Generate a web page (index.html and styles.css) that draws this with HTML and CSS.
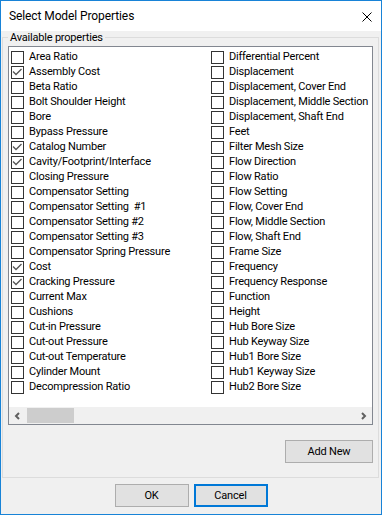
FILE: index.html
```html
<!DOCTYPE html>
<html lang="en">

<head>
    <meta charset="UTF-8">
    <title>Select Model Properties</title>
    <link rel="stylesheet" href="styles.css">
</head>

<body>
    <div class="window">
        <div class="titlebar">
            <span class="title">Select Model Properties</span>
            <svg class="close" width="10" height="10" viewBox="0 0 10 10">
                <path d="M0.5 0.5 L9.5 9.5 M9.5 0.5 L0.5 9.5" stroke="#000" stroke-width="1" fill="none" />
            </svg>
        </div>

        <fieldset class="group">
            <legend>Available properties</legend>
            <div class="listbox">
                <div class="items">
                    <!-- column 1 -->
                    <label class="item"><span class="box"></span>Area Ratio</label>
                    <label class="item"><span class="box checked"><svg viewBox="0 0 11 11"><polyline points="1,4.5 4,7.5 9.5,2" /></svg></span>Assembly Cost</label>
                    <label class="item"><span class="box"></span>Beta Ratio</label>
                    <label class="item"><span class="box"></span>Bolt Shoulder Height</label>
                    <label class="item"><span class="box"></span>Bore</label>
                    <label class="item"><span class="box"></span>Bypass Pressure</label>
                    <label class="item"><span class="box checked"><svg viewBox="0 0 11 11"><polyline points="1,4.5 4,7.5 9.5,2" /></svg></span>Catalog Number</label>
                    <label class="item"><span class="box checked"><svg viewBox="0 0 11 11"><polyline points="1,4.5 4,7.5 9.5,2" /></svg></span>Cavity/Footprint/Interface</label>
                    <label class="item"><span class="box"></span>Closing Pressure</label>
                    <label class="item"><span class="box"></span>Compensator Setting</label>
                    <label class="item"><span class="box"></span>Compensator Setting &nbsp;#1</label>
                    <label class="item"><span class="box"></span>Compensator Setting #2</label>
                    <label class="item"><span class="box"></span>Compensator Setting #3</label>
                    <label class="item"><span class="box"></span>Compensator Spring Pressure</label>
                    <label class="item"><span class="box checked"><svg viewBox="0 0 11 11"><polyline points="1,4.5 4,7.5 9.5,2" /></svg></span>Cost</label>
                    <label class="item"><span class="box checked"><svg viewBox="0 0 11 11"><polyline points="1,4.5 4,7.5 9.5,2" /></svg></span>Cracking Pressure</label>
                    <label class="item"><span class="box"></span>Current Max</label>
                    <label class="item"><span class="box"></span>Cushions</label>
                    <label class="item"><span class="box"></span>Cut-in Pressure</label>
                    <label class="item"><span class="box"></span>Cut-out Pressure</label>
                    <label class="item"><span class="box"></span>Cut-out Temperature</label>
                    <label class="item"><span class="box"></span>Cylinder Mount</label>
                    <label class="item"><span class="box"></span>Decompression Ratio</label>
                    <!-- column 2 -->
                    <label class="item"><span class="box"></span>Differential Percent</label>
                    <label class="item"><span class="box"></span>Displacement</label>
                    <label class="item"><span class="box"></span>Displacement, Cover End</label>
                    <label class="item"><span class="box"></span>Displacement, Middle Section</label>
                    <label class="item"><span class="box"></span>Displacement, Shaft End</label>
                    <label class="item"><span class="box"></span>Feet</label>
                    <label class="item"><span class="box"></span>Filter Mesh Size</label>
                    <label class="item"><span class="box"></span>Flow Direction</label>
                    <label class="item"><span class="box"></span>Flow Ratio</label>
                    <label class="item"><span class="box"></span>Flow Setting</label>
                    <label class="item"><span class="box"></span>Flow, Cover End</label>
                    <label class="item"><span class="box"></span>Flow, Middle Section</label>
                    <label class="item"><span class="box"></span>Flow, Shaft End</label>
                    <label class="item"><span class="box"></span>Frame Size</label>
                    <label class="item"><span class="box"></span>Frequency</label>
                    <label class="item"><span class="box"></span>Frequency Response</label>
                    <label class="item"><span class="box"></span>Function</label>
                    <label class="item"><span class="box"></span>Height</label>
                    <label class="item"><span class="box"></span>Hub Bore Size</label>
                    <label class="item"><span class="box"></span>Hub Keyway Size</label>
                    <label class="item"><span class="box"></span>Hub1 Bore Size</label>
                    <label class="item"><span class="box"></span>Hub1 Keyway Size</label>
                    <label class="item"><span class="box"></span>Hub2 Bore Size</label>
                </div>
                <div class="hscroll">
                    <span class="arrow">
                        <svg width="7" height="8" viewBox="0 0 7 8"><polyline points="5,1 2,4 5,7" /></svg>
                    </span>
                    <span class="thumb"></span>
                    <span class="track"></span>
                    <span class="arrow">
                        <svg width="7" height="8" viewBox="0 0 7 8"><polyline points="2,1 5,4 2,7" /></svg>
                    </span>
                </div>
            </div>
            <div class="actions">
                <button class="btn btn-add" type="button">Add New</button>
            </div>
        </fieldset>

        <div class="footer">
            <button class="btn btn-dlg" type="button">OK</button>
            <button class="btn btn-dlg btn-default" type="button">Cancel</button>
        </div>
    </div>
</body>

</html>
```

FILE: styles.css
```css
* {
    margin: 0;
    padding: 0;
    box-sizing: border-box;
}

body {
    font-family: Roboto, "Liberation Sans", sans-serif;
    font-size: 11px;
    letter-spacing: -0.2px;
    color: #000;
}

.window {
    width: 382px;
    height: 515px;
    border: 1px solid #1883d7;
    background: #f0f0f0;
    display: flex;
    flex-direction: column;
}

.titlebar {
    height: 30px;
    flex: none;
    background: #fff;
    display: flex;
    align-items: center;
    justify-content: space-between;
    padding: 0 9px 0 8px;
    font-size: 12px;
    letter-spacing: -0.1px;
}

.close {
    display: block;
    margin-top: 2px;
}

/* group box */
.group {
    min-width: 0;
    margin: 0 2px 0 1px;
    border: 1px solid #dcdcdc;
    padding: 0 5px 14px 5px;
}

.group legend {
    padding: 0 2px;
    line-height: 13px;
}

.listbox {
    margin-top: 2px;
    height: 379px;
    border: 1px solid #828790;
    background: #fff;
    display: flex;
    flex-direction: column;
}

.items {
    flex: 1;
    overflow: hidden;
    padding: 2px 0 0 2px;
    display: grid;
    grid-auto-flow: column;
    grid-template-rows: repeat(23, 15px);
    grid-auto-columns: 200px;
}

.item {
    display: flex;
    align-items: center;
    gap: 5px;
    white-space: nowrap;
}

.box {
    flex: none;
    align-self: flex-end;
    width: 13px;
    height: 13px;
    border: 1px solid #333;
    background: #fff;
}

.box svg {
    display: block;
    width: 11px;
    height: 11px;
    fill: none;
    stroke: #555;
    stroke-width: 1.3;
}

/* horizontal scrollbar */
.hscroll {
    height: 17px;
    flex: none;
    background: #f0f0f0;
    display: flex;
    align-items: center;
}

.arrow {
    width: 17px;
    height: 17px;
    display: flex;
    align-items: center;
    justify-content: center;
}

.arrow svg {
    fill: none;
    stroke: #606060;
    stroke-width: 2;
}

.thumb {
    width: 47px;
    height: 15px;
    margin-left: 1px;
    background: #cdcdcd;
}

.track {
    flex: 1;
}

/* buttons */
.actions {
    display: flex;
    justify-content: flex-end;
    margin-top: 15px;
}

.btn {
    height: 23px;
    background: #e1e1e1;
    border: 1px solid #adadad;
    font-family: inherit;
    font-size: 11px;
    letter-spacing: inherit;
    color: #000;
}

.btn-add {
    width: 88px;
}

.footer {
    flex: 1;
    display: flex;
    justify-content: center;
    gap: 5px;
    padding-top: 6px;
}

.btn-dlg {
    width: 74px;
}

.btn-default {
    border: 2px solid #0078d7;
}
```
